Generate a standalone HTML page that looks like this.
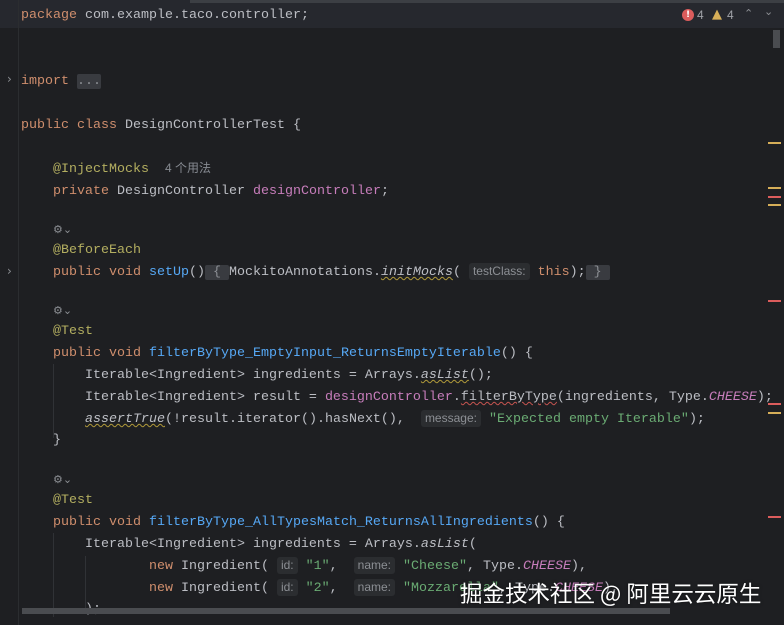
<!DOCTYPE html>
<html><head><meta charset="utf-8"><style>
body{margin:0;width:784px;height:625px;background:#1e1f22;overflow:hidden;position:relative;font-family:"Liberation Mono",monospace;font-size:13.33px;color:#bcbec4}
.l{position:absolute;left:21px;white-space:pre;height:22px;line-height:22px;margin-top:2px}
.k{color:#cf8e6d}.a{color:#b3ae60}.m{color:#56a8f5}.f{color:#c77dbb}.s{color:#6aab73}.i{font-style:italic}
.h{font-family:"Liberation Sans",sans-serif;font-size:12px;color:#8c8f94;background:#2b2d30;border-radius:3px;padding:1px 4px;display:inline-block;line-height:15px;vertical-align:0px}
.fold{background:#393b40;color:#8c8f94;border-radius:2px}
.uw{text-decoration:underline wavy #b09a3a;text-decoration-thickness:1px}
.ue{text-decoration:underline wavy #c75450;text-decoration-thickness:1px}
.g{font-family:"Liberation Sans","Noto Sans CJK SC",sans-serif;font-size:12px;color:#868a91;display:inline-block;line-height:15px}
.ic{position:absolute;left:53px;color:#8c8f94;font-size:11px;font-family:"DejaVu Sans",sans-serif}
.mk{position:absolute;left:768px;width:13px;height:2px}
.arr{position:absolute;left:7px;color:#8c8f94;font-size:12px;font-family:"DejaVu Sans",sans-serif}
.guide{position:absolute;width:1px;background:#303236}
</style></head><body>
<div style="position:absolute;left:0;top:0;width:784px;height:28px;background:#26282e"></div>
<div style="position:absolute;left:190px;top:0;width:594px;height:3px;background:#3c3f44"></div>
<div style="position:absolute;left:18px;top:0;width:1px;height:625px;background:#2b2d30"></div>
<div class="guide" style="left:53px;top:364px;height:74px"></div>
<div class="guide" style="left:53px;top:533px;height:84px"></div>
<div class="guide" style="left:85px;top:556px;height:52px"></div>

<div class="l" style="top:3px"><span class="k">package</span> com.example.taco.controller;</div>
<div class="arr" style="top:72px">›</div>
<div class="l" style="top:69px"><span class="k">import</span> <span class="fold">...</span></div>
<div class="l" style="top:113px"><span class="k">public class</span> DesignControllerTest {</div>
<div class="l" style="top:157px">    <span class="a">@InjectMocks</span>  <span class="g">4 个用法</span></div>
<div class="l" style="top:179px">    <span class="k">private</span> DesignController <span class="f">designController</span>;</div>
<div class="ic" style="top:223px">⚙⌄</div>
<div class="l" style="top:238px">    <span class="a">@BeforeEach</span></div>
<div class="arr" style="top:264px">›</div>
<div class="l" style="top:260px">    <span class="k">public void</span> <span class="m">setUp</span>()<span class="fold"> { </span>MockitoAnnotations.<span class="i uw">initMocks</span>( <span class="h">testClass:</span> <span class="k">this</span>);<span class="fold"> } </span></div>
<div class="ic" style="top:304px">⚙⌄</div>
<div class="l" style="top:319px">    <span class="a">@Test</span></div>
<div class="l" style="top:341px">    <span class="k">public void</span> <span class="m">filterByType_EmptyInput_ReturnsEmptyIterable</span>() {</div>
<div class="l" style="top:363px">        Iterable&lt;Ingredient&gt; ingredients = Arrays.<span class="i uw">asList</span>();</div>
<div class="l" style="top:385px">        Iterable&lt;Ingredient&gt; result = <span class="f">designController</span>.<span class="ue">filterByType</span>(ingredients, Type.<span class="f i">CHEESE</span>);</div>
<div class="l" style="top:407px">        <span class="i uw">assertTrue</span>(!result.iterator().hasNext(),  <span class="h">message:</span> <span class="s">"Expected empty Iterable"</span>);</div>
<div class="l" style="top:428px">    }</div>
<div class="ic" style="top:473px">⚙⌄</div>
<div class="l" style="top:488px">    <span class="a">@Test</span></div>
<div class="l" style="top:510px">    <span class="k">public void</span> <span class="m">filterByType_AllTypesMatch_ReturnsAllIngredients</span>() {</div>
<div class="l" style="top:532px">        Iterable&lt;Ingredient&gt; ingredients = Arrays.<span class="i">asList</span>(</div>
<div class="l" style="top:554px">                <span class="k">new</span> Ingredient( <span class="h">id:</span> <span class="s">"1"</span>,  <span class="h">name:</span> <span class="s">"Cheese"</span>, Type.<span class="f i">CHEESE</span>),</div>
<div class="l" style="top:576px">                <span class="k">new</span> Ingredient( <span class="h">id:</span> <span class="s">"2"</span>,  <span class="h">name:</span> <span class="s">"Mozzarella"</span>, Type.<span class="f i">CHEESE</span>),</div>
<div class="l" style="top:597px">        );</div>

<div style="position:absolute;left:22px;top:608px;width:648px;height:6px;background:#4a4c50"></div>
<div style="position:absolute;left:773px;top:30px;width:7px;height:18px;background:#4a4c50"></div>
<div style="position:absolute;left:668px;top:4px;width:116px;height:24px;background:#26282e"></div>
<div style="position:absolute;left:682px;top:9px;width:12px;height:12px;border-radius:50%;background:#db5c5c;color:#fff;font:bold 9px 'DejaVu Sans';text-align:center;line-height:12px">!</div>
<div style="position:absolute;left:697px;top:8px;font:12px 'Liberation Sans';color:#a0a3a8">4</div>
<div style="position:absolute;left:712px;top:7px;color:#d6ae58;font-size:13px;font-family:'DejaVu Sans'">▲</div>
<div style="position:absolute;left:727px;top:8px;font:12px 'Liberation Sans';color:#a0a3a8">4</div>
<div style="position:absolute;left:744px;top:7px;font:11px 'DejaVu Sans';color:#8c8f94">⌃</div>
<div style="position:absolute;left:764px;top:5px;font:11px 'DejaVu Sans';color:#8c8f94">⌄</div>

<div class="mk" style="top:142px;background:#d6ae58"></div>
<div class="mk" style="top:187px;background:#d6ae58"></div>
<div class="mk" style="top:196px;background:#db5c5c"></div>
<div class="mk" style="top:204px;background:#d6ae58"></div>
<div class="mk" style="top:300px;background:#db5c5c"></div>
<div class="mk" style="top:403px;background:#db5c5c"></div>
<div class="mk" style="top:412px;background:#d6ae58"></div>
<div class="mk" style="top:516px;background:#db5c5c"></div>

<div style="position:absolute;left:460px;top:577px;font:22.5px 'Noto Sans CJK SC',sans-serif;color:#fff;text-shadow:0 0 3px rgba(0,0,0,.5);white-space:nowrap">掘金技术社区 @ 阿里云云原生</div>
</body></html>
